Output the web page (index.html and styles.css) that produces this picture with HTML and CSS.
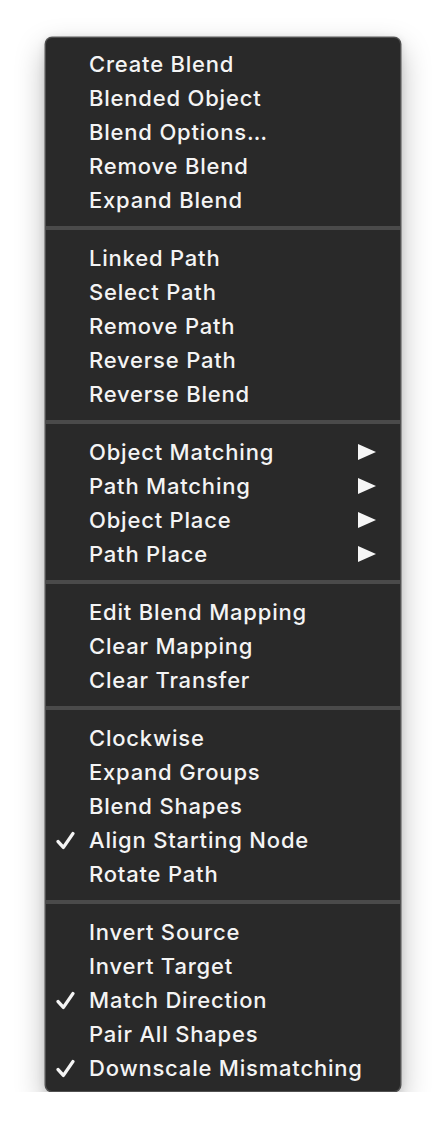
FILE: index.html
```html
<!DOCTYPE html>
<html>
<head>
<meta charset="utf-8">
<link rel="stylesheet" href="styles.css">
</head>
<body>
<div class="page">
  <div class="menu">
    <div class="section">
      <div class="item"><span class="mark"></span><span class="label">Create Blend</span></div>
      <div class="item"><span class="mark"></span><span class="label">Blended Object</span></div>
      <div class="item"><span class="mark"></span><span class="label">Blend Options…</span></div>
      <div class="item"><span class="mark"></span><span class="label">Remove Blend</span></div>
      <div class="item"><span class="mark"></span><span class="label">Expand Blend</span></div>
    </div>
    <div class="sep"></div>
    <div class="section">
      <div class="item"><span class="mark"></span><span class="label">Linked Path</span></div>
      <div class="item"><span class="mark"></span><span class="label">Select Path</span></div>
      <div class="item"><span class="mark"></span><span class="label">Remove Path</span></div>
      <div class="item"><span class="mark"></span><span class="label">Reverse Path</span></div>
      <div class="item"><span class="mark"></span><span class="label">Reverse Blend</span></div>
    </div>
    <div class="sep"></div>
    <div class="section">
      <div class="item"><span class="mark"></span><span class="label">Object Matching</span><svg class="arrow" viewBox="0 0 18 16"><path d="M0 0 L18 8 L0 16 Z"/></svg></div>
      <div class="item"><span class="mark"></span><span class="label">Path Matching</span><svg class="arrow" viewBox="0 0 18 16"><path d="M0 0 L18 8 L0 16 Z"/></svg></div>
      <div class="item"><span class="mark"></span><span class="label">Object Place</span><svg class="arrow" viewBox="0 0 18 16"><path d="M0 0 L18 8 L0 16 Z"/></svg></div>
      <div class="item"><span class="mark"></span><span class="label">Path Place</span><svg class="arrow" viewBox="0 0 18 16"><path d="M0 0 L18 8 L0 16 Z"/></svg></div>
    </div>
    <div class="sep"></div>
    <div class="section">
      <div class="item"><span class="mark"></span><span class="label">Edit Blend Mapping</span></div>
      <div class="item"><span class="mark"></span><span class="label">Clear Mapping</span></div>
      <div class="item"><span class="mark"></span><span class="label">Clear Transfer</span></div>
    </div>
    <div class="sep"></div>
    <div class="section">
      <div class="item"><span class="mark"></span><span class="label">Clockwise</span></div>
      <div class="item"><span class="mark"></span><span class="label">Expand Groups</span></div>
      <div class="item"><span class="mark"></span><span class="label">Blend Shapes</span></div>
      <div class="item"><span class="mark"><svg class="check" viewBox="0 0 18 18"><path d="M2 10 L7 15.5 L16 2.5"/></svg></span><span class="label">Align Starting Node</span></div>
      <div class="item"><span class="mark"></span><span class="label">Rotate Path</span></div>
    </div>
    <div class="sep"></div>
    <div class="section last">
      <div class="item"><span class="mark"></span><span class="label">Invert Source</span></div>
      <div class="item"><span class="mark"></span><span class="label">Invert Target</span></div>
      <div class="item"><span class="mark"><svg class="check" viewBox="0 0 18 18"><path d="M2 10 L7 15.5 L16 2.5"/></svg></span><span class="label">Match Direction</span></div>
      <div class="item"><span class="mark"></span><span class="label">Pair All Shapes</span></div>
      <div class="item"><span class="mark"><svg class="check" viewBox="0 0 18 18"><path d="M2 10 L7 15.5 L16 2.5"/></svg></span><span class="label">Downscale Mismatching</span></div>
    </div>
  </div>
</div>
</body>
</html>
```

FILE: styles.css
```css
html, body {
  margin: 0;
  padding: 0;
  background: #ffffff;
}

.page {
  padding: 37px 0 0 45px;
}

.menu {
  width: 354px;
  background: #292929;
  border: 1px solid #505050;
  border-radius: 7px;
  box-shadow: 0 0 0 0.5px rgba(0, 0, 0, 0.6), 0 12px 30px rgba(0, 0, 0, 0.28), 0 2px 8px rgba(0, 0, 0, 0.12);
  padding: 9px 0 6px 0;
  font-family: Inter, "Liberation Sans", sans-serif;
  font-size: 22px;
  font-weight: 500;
  color: #f4f4f4;
}

.section {
  display: flex;
  flex-direction: column;
}

.item {
  height: 34px;
  display: flex;
  align-items: center;
  position: relative;
}

.mark {
  width: 43px;
  display: flex;
  align-items: center;
  justify-content: flex-end;
  flex: none;
}

.label {
  flex: 1;
  padding-left: 0;
  letter-spacing: 0.8px;
}

.check {
  width: 19px;
  height: 19px;
  margin-right: 14px;
  fill: none;
  stroke: #f4f4f4;
  stroke-width: 3.2;
  stroke-linecap: round;
  stroke-linejoin: round;
}

.arrow {
  width: 18px;
  height: 16px;
  margin-right: 24px;
  fill: #f6f6f6;
  flex: none;
}

.sep {
  height: 4px;
  background: #4a4a4a;
  margin: 9px 0 11px 0;
}
```
